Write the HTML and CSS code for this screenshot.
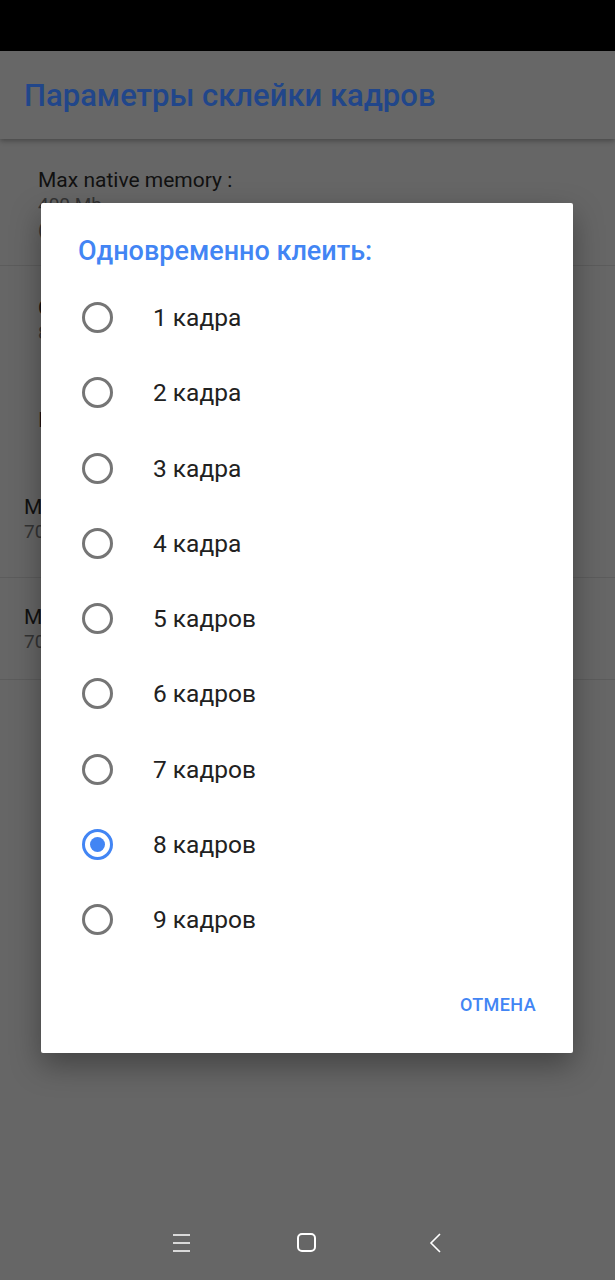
FILE: index.html
```html
<!DOCTYPE html>
<html lang="ru">
  <head>
    <meta charset="UTF-8" />
    <meta name="viewport" content="width=device-width, initial-scale=1.0" />
    <title>Параметры склейки кадров</title>
    <link rel="stylesheet" href="styles.css">
  </head>
  <body>
    <div class="screen">
      <div class="status-bar"></div>
      <header class="app-bar">
        <h1>Параметры склейки кадров</h1>
      </header>

      <main class="content">
        <div class="pref pref-first">
          <div class="pref-title">Max native memory :</div>
          <div class="pref-summary">400 Mb</div>
          <div class="pref-summary">(0 Mb)</div>
        </div>
        <div class="pref pref-group">
          <div class="pref-title">Склейка</div>
          <div class="pref-summary">8 кадров</div>
          <div class="pref-title pref-spaced">Image</div>
          <div class="pref-wide">
            <div class="pref-title">Max width</div>
            <div class="pref-summary">7000 px</div>
          </div>
        </div>
        <div class="pref pref-last">
          <div class="pref-title">Max height</div>
          <div class="pref-summary">7000 px</div>
        </div>
      </main>

      <nav class="nav-bar">
        <span class="nav-btn">
          <svg width="20" height="20" viewBox="0 0 20 20"><path d="M2 2h17M2 10h17M2 18h17" stroke="#fff" stroke-width="1.6" fill="none"/></svg>
        </span>
        <span class="nav-btn">
          <svg width="22" height="22" viewBox="0 0 22 22"><rect x="2" y="2" width="17" height="17" rx="4" stroke="#fff" stroke-width="2" fill="none"/></svg>
        </span>
        <span class="nav-btn">
          <svg width="20" height="22" viewBox="0 0 20 22"><path d="M14 2L5 11l9 9" stroke="#fff" stroke-width="1.6" fill="none"/></svg>
        </span>
      </nav>

      <div class="dialog">
        <h2 class="dialog-title">Одновременно клеить:</h2>
        <ul class="options">
          <li class="option"><span class="radio"></span>1 кадра</li>
          <li class="option"><span class="radio"></span>2 кадра</li>
          <li class="option"><span class="radio"></span>3 кадра</li>
          <li class="option"><span class="radio"></span>4 кадра</li>
          <li class="option"><span class="radio"></span>5 кадров</li>
          <li class="option"><span class="radio"></span>6 кадров</li>
          <li class="option"><span class="radio"></span>7 кадров</li>
          <li class="option"><span class="radio checked"></span>8 кадров</li>
          <li class="option"><span class="radio"></span>9 кадров</li>
        </ul>
        <div class="dialog-actions">
          <button class="text-btn">Отмена</button>
        </div>
      </div>
    </div>
  </body>
</html>
```

FILE: styles.css
```css
* {
  box-sizing: border-box;
}
body {
  margin: 0;
  background-color: #666;
  font-family: Roboto, "Noto Sans", sans-serif;
}
.screen {
  position: relative;
  width: 615px;
  height: 1280px;
  display: flex;
  flex-direction: column;
  overflow: hidden;
  background-color: #666;
}
.status-bar {
  height: 51px;
  background-color: #000;
}
.app-bar {
  height: 88px;
  display: flex;
  align-items: center;
  padding-left: 24px;
  background-color: #676767;
  box-shadow: 0 2px 5px rgba(0, 0, 0, 0.3);
  position: relative;
  z-index: 1;
}
.app-bar h1 {
  margin: 0;
  font-size: 31px;
  font-weight: 500;
  color: #21468a;
}
.content {
  flex: 1;
}
.pref {
  border-bottom: 1px solid #5c5c5c;
}
.pref-title {
  font-size: 21px;
  line-height: 22px;
  color: #111;
}
.pref-summary {
  font-size: 19px;
  line-height: 22px;
  margin-top: 3px;
  color: #333;
}
.pref-first {
  height: 127px;
  padding: 30px 0 0 38px;
}
.pref-group {
  height: 312px;
  padding: 31px 0 0 38px;
}
.pref-spaced {
  margin-top: 65px;
}
.pref-wide {
  margin: 65px 0 0 -14px;
}
.pref-last {
  height: 102px;
  padding: 28px 0 0 24px;
}
.nav-bar {
  height: 80px;
  display: flex;
  align-items: center;
  padding: 6px 0 0 161px;
}
.nav-btn {
  width: 40px;
  display: flex;
  justify-content: center;
}
.nav-btn + .nav-btn {
  margin-left: 86px;
}
.nav-btn:last-child {
  margin-left: 89px;
}
.dialog {
  position: absolute;
  left: 41px;
  top: 203px;
  width: 532px;
  height: 850px;
  background: #fff;
  border-radius: 2px;
  box-shadow: 0 12px 30px rgba(0, 0, 0, 0.35);
  padding: 33px 37px 24px 0;
  z-index: 2;
}
.dialog-title {
  margin: 0 0 14px 37px;
  font-size: 27px;
  line-height: 30px;
  font-weight: 500;
  color: #4285f4;
}
.options {
  list-style: none;
  margin: 0;
  padding: 0;
}
.option {
  height: 75.25px;
  display: flex;
  align-items: center;
  padding-left: 41px;
  font-size: 24.5px;
  color: #212121;
}
.radio {
  width: 31px;
  height: 31px;
  border: 3px solid #757575;
  border-radius: 50%;
  margin-right: 40px;
  display: flex;
  align-items: center;
  justify-content: center;
}
.radio.checked {
  border-color: #4285f4;
}
.radio.checked::after {
  content: "";
  width: 15px;
  height: 15px;
  border-radius: 50%;
  background-color: #4285f4;
}
.dialog-actions {
  margin-top: 23px;
  display: flex;
  justify-content: flex-end;
}
.text-btn {
  height: 48px;
  padding: 0;
  border: none;
  background: none;
  font-family: Roboto, sans-serif;
  font-size: 18px;
  font-weight: 500;
  letter-spacing: 0.4px;
  text-transform: uppercase;
  color: #4285f4;
  cursor: pointer;
}
```
